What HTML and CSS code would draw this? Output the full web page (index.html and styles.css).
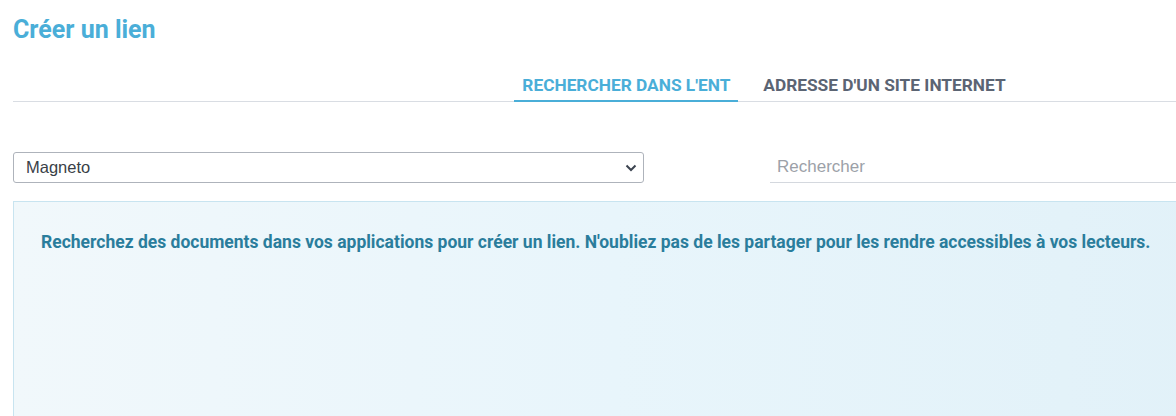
FILE: index.html
```html
<!DOCTYPE html>
<html lang="fr">
<head>
<meta charset="utf-8">
<title>Créer un lien</title>
<link rel="stylesheet" href="styles.css">
</head>
<body>
<div class="page">
  <h1 class="title">Créer un lien</h1>
  <nav class="tabs">
    <button class="tab active">Rechercher dans l'ENT</button>
    <button class="tab">Adresse d'un site internet</button>
  </nav>
  <div class="filters">
    <div class="select">
      <span class="select-value">Magneto</span>
      <svg class="chevron" width="12" height="8" viewBox="0 0 12 8"><path d="M1.5 1.5 L6 6 L10.5 1.5" fill="none" stroke="#3c4450" stroke-width="2"/></svg>
    </div>
    <div class="search"><span class="placeholder">Rechercher</span></div>
  </div>
  <div class="info">
    <p class="info-text">Recherchez des documents dans vos applications pour créer un lien. N'oubliez pas de les partager pour les rendre accessibles à vos lecteurs.</p>
  </div>
</div>
</body>
</html>
```

FILE: styles.css
```css
html, body {
  margin: 0;
  padding: 0;
  overflow: hidden;
  background: #fff;
}
body {
  font-family: Roboto, "Liberation Sans", sans-serif;
}
.page {
  width: 1502px;
  padding-left: 13px;
}
.title {
  margin: 0;
  padding-top: 15px;
  font-size: 25px;
  line-height: 30px;
  font-weight: 700;
  color: #4aaed8;
}
.tabs {
  display: flex;
  justify-content: center;
  gap: 17px;
  margin-top: 24px;
  border-bottom: 1px solid #d9dde3;
}
.tab {
  border: 0;
  background: none;
  font-family: Roboto, "Liberation Sans", sans-serif;
  font-size: 17.3px;
  font-weight: 700;
  text-transform: uppercase;
  color: #5b6473;
  padding: 6px 8px 5px;
  line-height: 20px;
  border-bottom: 2px solid transparent;
  margin-bottom: -1px;
}
.tab.active {
  color: #4aaed8;
  border-bottom-color: #4aaed8;
}
.filters {
  display: flex;
  margin-top: 50px;
  gap: 126px;
}
.select {
  width: 611px;
  height: 29px;
  border: 1px solid #aeb3bb;
  border-radius: 3px;
  display: flex;
  align-items: center;
  justify-content: space-between;
  padding: 0 6px 0 12px;
}
.select-value {
  font-family: "Liberation Sans", Arial, sans-serif;
  font-size: 16.5px;
  color: #3a3f47;
}
.chevron {
  display: block;
}
.search {
  flex: 1;
  height: 30px;
  border-bottom: 1px solid #d4d8de;
  display: flex;
  align-items: center;
  padding-left: 7px;
}
.placeholder {
  font-family: "Liberation Sans", Arial, sans-serif;
  font-size: 17px;
  color: #9ca1a8;
}
.info {
  margin-top: 18px;
  height: 260px;
  border: 1px solid #c8e4f0;
  background: linear-gradient(90deg, #f1f8fb 0%, #e8f5fb 40%, #deeff7 100%);
  padding: 28px 27px;
}
.info-text {
  margin: 0;
  font-size: 17.5px;
  line-height: 24px;
  font-weight: 700;
  color: #2a7d9c;
}
```
